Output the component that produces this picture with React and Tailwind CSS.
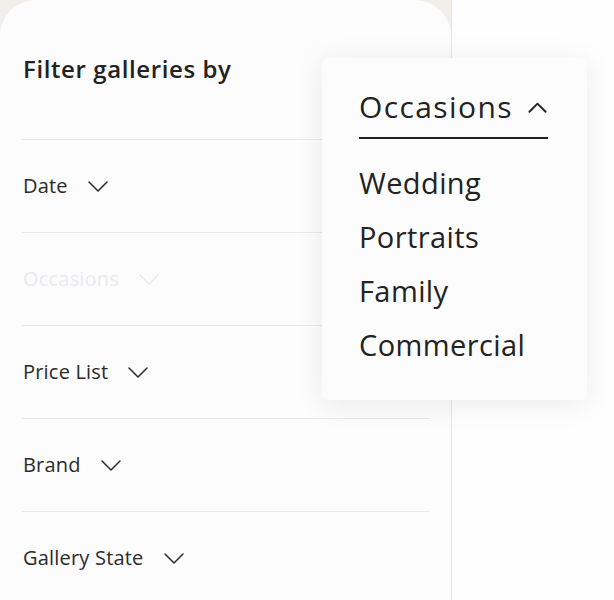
import React from "react";

const Chevron = ({ up = false, className = "", sw = 1.5 }) => (
  <svg viewBox="0 0 20 11" className={className} fill="none" stroke="currentColor" strokeWidth={sw} strokeLinecap="round" strokeLinejoin="round">
    {up ? <path d="M1.5 10 L10 1.5 L18.5 10" /> : <path d="M1 1 L10 10 L19 1" />}
  </svg>
);

const rows = [
  { label: "Date", faded: false },
  { label: "Occasions", faded: true },
  { label: "Price List", faded: false },
  { label: "Brand", faded: false },
  { label: "Gallery State", faded: false },
];

export default function App() {
  return (
    <div className="relative w-[614px] h-[600px] overflow-hidden bg-[#f2eeea] flex" style={{ fontFamily: "'Open Sans', 'Noto Sans', sans-serif" }}>
      <div className="w-[451px] h-full shrink-0 bg-[#fdfcfd] rounded-tl-[36px] rounded-tr-[36px] pl-[22px] pr-[22px] flex flex-col">
        <div className="h-[139px] shrink-0 flex items-center pb-[2px] pl-[1px] text-[24px] font-semibold tracking-[0.6px] text-[#222]">
          Filter galleries by
        </div>
        {rows.map((r) => (
          <div key={r.label} className="h-[93px] shrink-0 border-t border-[#e9e7eb] flex items-center gap-[20px] pl-[1px]">
            <span className={`text-[20px] tracking-[0.2px] ${r.faded ? "text-[#ebe9ed]" : "text-[#2a2a2a]"}`}>{r.label}</span>
            <Chevron className={`w-[20px] h-[11px] shrink-0 ${r.faded ? "text-[#ebe9ed]" : "text-[#2a2a2a]"}`} />
          </div>
        ))}
      </div>
      <div className="flex-1 h-full bg-[#fefefe] border-l border-[#e6e4e6]" />

      <div className="absolute left-[322px] top-[58px] w-[265px] h-[342px] bg-[#fdfcfd] rounded-[6px] shadow-[0_4px_30px_rgba(0,0,0,0.08)] pl-[37px] pt-[34px]">
        <div className="w-[189px] pb-[15px] border-b-2 border-[#222] flex items-center gap-[15px] text-[#222]">
          <span className="text-[30px] leading-none tracking-[1.4px] shrink-0">Occasions</span>
          <Chevron up sw={2} className="w-[19px] h-[11px] shrink-0" />
        </div>
        <div className="flex flex-col pt-[17px] text-[#222]">
          {["Wedding", "Portraits", "Family", "Commercial"].map((t) => (
            <div key={t} className="h-[54px] flex items-center text-[29px] tracking-[0.4px]">{t}</div>
          ))}
        </div>
      </div>
    </div>
  );
}
